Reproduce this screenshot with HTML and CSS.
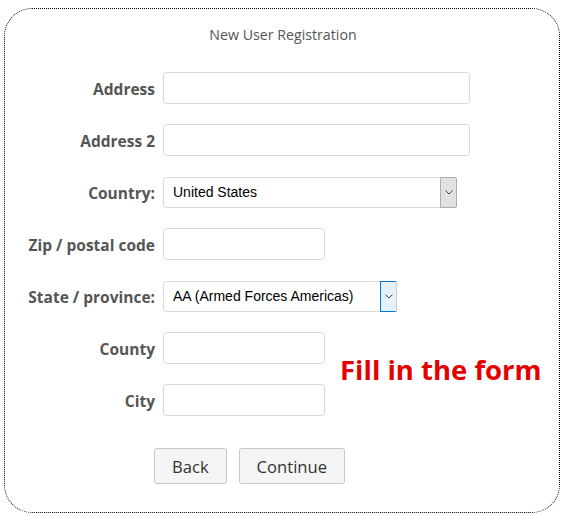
FILE: index.html
```html
<!DOCTYPE html>
<html>
<head>
<meta charset="utf-8">
<link rel="stylesheet" href="styles.css">
</head>
<body>
<div class="box">
  <div class="title">New User Registration</div>
  <div class="form">
    <div class="row"><label class="lbl">Address</label><div class="input w-long"></div></div>
    <div class="row"><label class="lbl">Address 2</label><div class="input w-long"></div></div>
    <div class="row"><label class="lbl">Country:</label>
      <div class="select w-country"><span class="val">United States</span><span class="arrow"><svg width="8" height="5" viewBox="0 0 8 5"><path d="M0.5 0.5 L4 4 L7.5 0.5" fill="none" stroke="#444" stroke-width="1"/></svg></span></div>
    </div>
    <div class="row"><label class="lbl">Zip / postal code</label><div class="input w-short"></div></div>
    <div class="row"><label class="lbl">State / province:</label>
      <div class="select w-state"><span class="val">AA (Armed Forces Americas)</span><span class="arrow focus"><svg width="8" height="5" viewBox="0 0 8 5"><path d="M0.5 0.5 L4 4 L7.5 0.5" fill="none" stroke="#444" stroke-width="1"/></svg></span></div>
    </div>
    <div class="split">
      <div class="col">
        <div class="row"><label class="lbl">County</label><div class="input w-short"></div></div>
        <div class="row"><label class="lbl">City</label><div class="input w-short"></div></div>
      </div>
      <div class="note">Fill in the form</div>
    </div>
    <div class="buttons">
      <button class="btn">Back</button>
      <button class="btn">Continue</button>
    </div>
  </div>
</div>
</body>
</html>
```
FILE: styles.css
```css
html, body { margin: 0; padding: 0; background: #fff; }
body { padding: 8px 0 0 4px; font-family: "Open Sans", sans-serif; }
.box {
  box-sizing: border-box;
  width: 556px;
  height: 505px;
  border: 1px dotted #000;
  border-radius: 28px;
}
.title {
  text-align: center;
  font-size: 14.2px;
  line-height: 20px;
  color: #555;
  margin-top: 16px;
  margin-left: 2px;
}
.form {
  display: flex;
  flex-direction: column;
  gap: 20px;
  margin-top: 27px;
}
.row {
  display: flex;
  align-items: center;
  height: 32px;
}
.lbl {
  width: 150px;
  text-align: right;
  margin-right: 8px;
  padding-top: 2px;
  font-weight: bold;
  font-size: 15.5px;
  color: #555;
}
.input {
  box-sizing: border-box;
  height: 32px;
  border: 1px solid #dcdcdc;
  border-radius: 3px;
  background: #fff;
}
.w-long { width: 307px; }
.w-short { width: 162px; }
.select {
  box-sizing: border-box;
  height: 31px;
  display: flex;
  align-items: stretch;
  border: 1px solid #dcdcdc;
  border-radius: 3px;
  font-family: "Liberation Sans", Arial, sans-serif;
  font-size: 14px;
  color: #000;
}
.w-country { width: 294px; }
.w-state { width: 234px; }
.select .val {
  flex: 1;
  display: flex;
  align-items: center;
  padding-left: 9px;
}
.arrow {
  width: 17px;
  box-sizing: border-box;
  background: #e1e1e1;
  border: 1px solid #adadad;
  border-radius: 0 2px 2px 0;
  margin: -1px -1px -1px 0;
  display: flex;
  align-items: center;
  justify-content: center;
}
.arrow.focus {
  background: #e5f1fb;
  border-color: #0078d7;
  border-right-color: #c8c8c8;
}
.split {
  display: flex;
  align-items: flex-start;
}
.col {
  display: flex;
  flex-direction: column;
  gap: 20px;
}
.note {
  margin-left: 15px;
  margin-top: 19px;
  font-weight: bold;
  font-size: 27.5px;
  line-height: 38px;
  color: #e50000;
  white-space: nowrap;
}
.buttons {
  display: flex;
  gap: 12px;
  margin-top: 12px;
  padding-left: 149px;
}
.btn {
  box-sizing: border-box;
  height: 36px;
  padding: 0 17px;
  font-family: "Open Sans", sans-serif;
  font-size: 16.6px;
  color: #333;
  background: #f5f5f5;
  border: 1px solid #c8c8c8;
  border-radius: 3px;
}
```
